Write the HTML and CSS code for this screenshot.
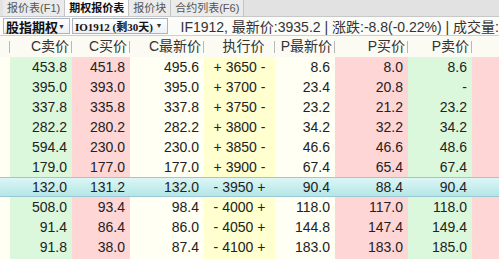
FILE: index.html
```html
<!DOCTYPE html>
<html lang="zh-CN">
<head>
  <meta charset="UTF-8">
  <title>期权报价表</title>
  <link rel="stylesheet" href="styles.css">
</head>
<body>
  <!-- Tabs -->
  <div class="tabs">
    <div class="tab">报价表(F1)</div>
    <div class="tab active">期权报价表</div>
    <div class="tab">报价块</div>
    <div class="tab">合约列表(F6)</div>
  </div>

  <!-- Toolbar -->
  <div class="toolbar">
    <div class="select sel-type"><span>股指期权</span><i>▼</i></div>
    <div class="select sel-month"><span>IO1912 (剩30天)</span><i>▼</i></div>
    <div class="status">IF1912, 最新价:3935.2 | 涨跌:-8.8(-0.22%) | 成交量:</div>
  </div>

  <!-- Quote table -->
  <div class="quotes">
    <div class="row head">
      <div class="c0"></div>
      <div class="c1">C卖价</div>
      <div class="c2">C买价</div>
      <div class="c3">C最新价</div>
      <div class="c4 mid">执行价</div>
      <div class="c5">P最新价</div>
      <div class="c6">P买价</div>
      <div class="c7">P卖价</div>
      <div class="c8"></div>
    </div>
    <div id="body"></div>
  </div>

  <script>
    const rows = [
      ['453.8', '451.8', '495.6', '+ 3650 -', '8.6', '8.0', '8.6'],
      ['395.0', '393.0', '395.0', '+ 3700 -', '23.4', '20.8', '-'],
      ['337.8', '335.8', '337.8', '+ 3750 -', '23.2', '21.2', '23.2'],
      ['282.2', '280.2', '282.2', '+ 3800 -', '34.2', '32.2', '34.2'],
      ['594.4', '230.0', '230.0', '+ 3850 -', '46.6', '46.6', '48.6'],
      ['179.0', '177.0', '177.0', '+ 3900 -', '67.4', '65.4', '67.4'],
      ['132.0', '131.2', '132.0', '- 3950 +', '90.4', '88.4', '90.4', 'sel'],
      ['508.0', '93.4', '98.4', '- 4000 +', '118.0', '117.0', '118.0'],
      ['91.4', '86.4', '86.0', '- 4050 +', '144.8', '147.4', '149.4'],
      ['91.8', '38.0', '87.4', '- 4100 +', '183.0', '183.0', '185.0'],
      ['', '', '', '', '', '', '']
    ];

    const body = document.getElementById('body');
    rows.forEach((r) => {
      const row = document.createElement('div');
      row.className = 'row' + (r[7] ? ' ' + r[7] : '');
      let html = '<div class="c0"></div>';
      for (let i = 0; i < 7; i++) {
        html += '<div class="c' + (i + 1) + (i === 3 ? ' mid' : '') + '">' + r[i] + '</div>';
      }
      html += '<div class="c8"></div>';
      row.innerHTML = html;
      body.appendChild(row);
    });
  </script>
</body>
</html>
```

FILE: styles.css
```css
body {
  margin: 0;
  font-family: "Liberation Sans", "Noto Sans CJK SC", sans-serif;
  background: #fdfdf6;
  color: #222;
  overflow: hidden;
}
.tabs {
  display: flex;
  height: 16px;
  padding-left: 3px;
  background: #e2e2e2;
  border-bottom: 1px solid #c8c8c8;
}
.tab {
  padding: 0 4px;
  font-size: 11px;
  line-height: 16px;
  color: #555;
  border-right: 1px solid #c4c4c4;
  background: #ebebeb;
}
.tab.active {
  background: #fdfdfd;
  color: #111;
  font-weight: bold;
}
.toolbar {
  display: flex;
  align-items: center;
  height: 18px;
  padding: 0 0 0 3px;
  border-bottom: 1px solid #cfcfcf;
  background: #fbfbf8;
  white-space: nowrap;
}
.select {
  display: flex;
  align-items: center;
  justify-content: space-between;
  height: 14px;
  margin-right: 2px;
  padding: 0 4px 0 2px;
  border: 1px solid #a9b4c4;
  background: linear-gradient(#ffffff, #eef0f4);
  font-weight: bold;
  color: #111;
}
.select i {
  font-style: normal;
  font-size: 7px;
  color: #333;
}
.sel-type {
  width: 61px;
  font-size: 13px;
}
.sel-month {
  width: 92px;
  font-size: 11px;
  font-family: "Liberation Serif", "Noto Sans CJK SC", serif;
}
.status {
  margin-left: 11px;
  font-size: 14px;
  color: #333;
}
.quotes {
  font-size: 14px;
}
.row {
  display: grid;
  grid-template-columns: 10px 62px 58px 74px 71px 60px 73px 64px 1fr;
  height: 20px;
  line-height: 20px;
}
.row > div {
  text-align: right;
  padding-right: 5px;
  white-space: nowrap;
  overflow: hidden;
}
.row > .mid {
  text-align: center;
  padding-right: 0;
}
.head {
  height: 21px;
  line-height: 21px;
  background: #fbfbf4;
}
.head > div {
  position: relative;
  color: #333;
  background: transparent;
}
.head > div:not(.c8)::after {
  content: "";
  position: absolute;
  right: 0;
  top: 5px;
  height: 12px;
  border-right: 1px solid #b8b8b8;
}
.head > .c1, .head > .c2, .head > .c3, .head > .c5, .head > .c6, .head > .c7 {
  padding-right: 3px;
}
.head > .mid {
  padding-left: 8px;
}
.c0, .c3, .c5 {
  background: #fffff3;
}
.c1, .c7 {
  background: #dcf8dc;
}
.c2, .c6, .c8 {
  background: #ffd6d6;
}
.c4 {
  background: #ffffcf;
}
.row.sel {
  background: linear-gradient(#dcf6f6, #b4e6e6);
  border-top: 1px solid #9cc8d4;
  border-bottom: 1px solid #9cc8d4;
  height: 18px;
  line-height: 18px;
}
.row.sel > div {
  background: transparent;
}
```
